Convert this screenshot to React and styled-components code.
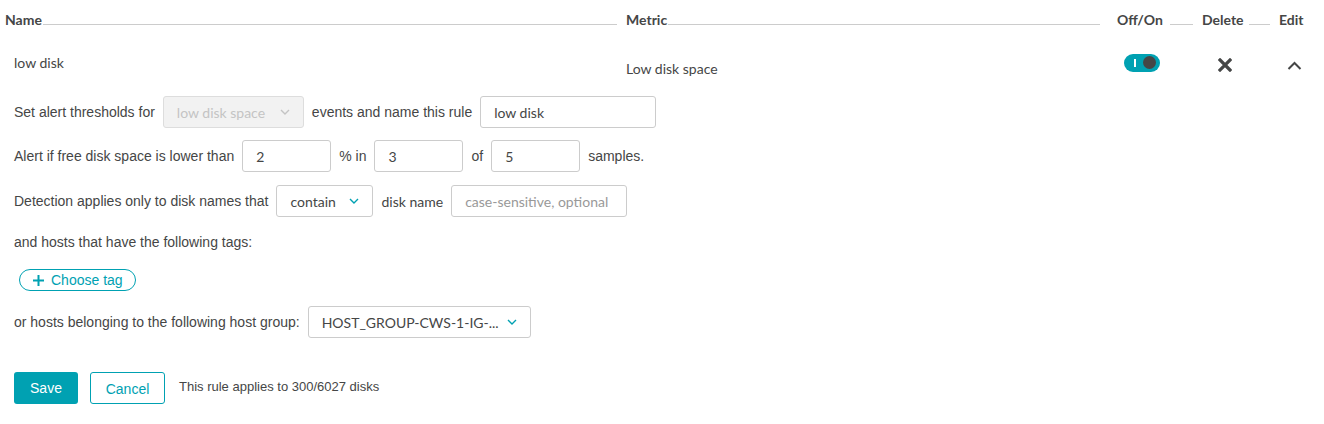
import React, { useState } from "react";
import styled, { createGlobalStyle } from "styled-components";

const GlobalStyle = createGlobalStyle`
  body {
    margin: 0;
    background: #ffffff;
    color: #454646;
    font-family: "Liberation Sans", Arial, sans-serif;
  }
`;

const TEAL = "#00a1b2";

const ChevronDown = ({ color = TEAL }) => (
  <svg width="10" height="6" viewBox="0 0 10 6">
    <path d="M1 1l4 4 4-4" fill="none" stroke={color} strokeWidth="1.4" />
  </svg>
);

const App = () => {
  const [enabled, setEnabled] = useState(true);

  return (
    <>
      <GlobalStyle />
      <Page>
        <Header>
          <HeadCell>
            <HeadText>Name</HeadText>
            <HeadLine />
          </HeadCell>
          <HeadCell>
            <HeadText>Metric</HeadText>
            <HeadLine $gap={17} />
          </HeadCell>
          <HeadCell>
            <HeadText>Off/On</HeadText>
            <HeadLine $left={7} />
          </HeadCell>
          <HeadCell>
            <HeadText>Delete</HeadText>
            <HeadLine $left={5} />
          </HeadCell>
          <HeadCell>
            <HeadText>Edit</HeadText>
          </HeadCell>
        </Header>

        <RuleRow>
          <RuleName>low disk</RuleName>
          <RuleMetric>Low disk space</RuleMetric>
          <IconCell $left={7} $shift={-5}>
            <Toggle $on={enabled} onClick={() => setEnabled(!enabled)}>
              <ToggleBar />
              <ToggleKnob />
            </Toggle>
          </IconCell>
          <IconCell $left={16}>
            <svg width="14" height="14" viewBox="0 0 14 14">
              <path
                d="M2 2l10 10M12 2L2 12"
                stroke="#454646"
                strokeWidth="3.2"
                strokeLinecap="square"
              />
            </svg>
          </IconCell>
          <IconCell $left={8}>
            <svg width="15" height="9" viewBox="0 0 15 9">
              <path
                d="M1.5 8l6-6 6 6"
                fill="none"
                stroke="#454646"
                strokeWidth="2"
              />
            </svg>
          </IconCell>
        </RuleRow>

        <Form>
          <FormRow>
            <Label>Set alert thresholds for</Label>
            <Select $width={141} disabled>
              <span>low disk space</span>
              <ChevronDown color="#c4c4c4" />
            </Select>
            <Label>events and name this rule</Label>
            <TextInput $width={176} defaultValue="low disk" />
          </FormRow>

          <FormRow>
            <Label>Alert if free disk space is lower than</Label>
            <TextInput $width={89} defaultValue="2" />
            <Label>% in</Label>
            <TextInput $width={89} defaultValue="3" />
            <Label>of</Label>
            <TextInput $width={89} defaultValue="5" />
            <Label>samples.</Label>
          </FormRow>

          <FormRow $shift={2}>
            <Label>Detection applies only to disk names that</Label>
            <Select $width={97}>
              <span>contain</span>
              <ChevronDown />
            </Select>
            <Label $font="Lato">disk name</Label>
            <TextInput $width={176} placeholder="case-sensitive, optional" />
          </FormRow>

          <FormRow $height={40}>
            <Label>and hosts that have the following tags:</Label>
          </FormRow>

          <TagRow>
            <TagButton>
              <svg width="11" height="11" viewBox="0 0 11 11">
                <path d="M5.5 0v11M0 5.5h11" stroke={TEAL} strokeWidth="2" />
              </svg>
              Choose tag
            </TagButton>
          </TagRow>

          <FormRow $height={48}>
            <Label>or hosts belonging to the following host group:</Label>
            <Select $width={223}>
              <span>HOST_GROUP-CWS-1-IG-...</span>
              <ChevronDown />
            </Select>
          </FormRow>

          <Actions>
            <PrimaryButton>Save</PrimaryButton>
            <SecondaryButton>Cancel</SecondaryButton>
            <Note>This rule applies to 300/6027 disks</Note>
          </Actions>
        </Form>
      </Page>
    </>
  );
};

export default App;

const Page = styled.div`
  width: 1324px;
  height: 424px;
  overflow: hidden;
`;

const Header = styled.div`
  display: grid;
  grid-template-columns: 621px 491px 85px 77px 1fr;
  height: 40px;
  padding-left: 5px;
  align-items: center;
`;

const HeadCell = styled.div`
  display: flex;
  align-items: baseline;
  padding-bottom: 1px;
`;

const HeadText = styled.span`
  font-family: "Lato", "Open Sans", sans-serif;
  font-weight: 700;
  font-size: 14px;
  color: #454646;
`;

const HeadLine = styled.span`
  flex: 1;
  height: 0;
  border-bottom: 1px solid #cccccc;
  margin-left: ${(p) => p.$left || 1}px;
  margin-right: ${(p) => p.$gap || 9}px;
`;

const RuleRow = styled.div`
  display: grid;
  grid-template-columns: 626px 491px 85px 77px 1fr;
  height: 50px;
  align-items: center;
  font-family: "Lato", "Open Sans", sans-serif;
  font-size: 14px;
  color: #454646;
`;

const RuleName = styled.div`
  padding-left: 14px;
  padding-bottom: 6px;
`;

const RuleMetric = styled.div`
  padding-top: 6px;
`;

const IconCell = styled.div`
  display: flex;
  align-items: center;
  padding-left: ${(p) => p.$left || 0}px;
  margin-top: ${(p) => p.$shift || 0}px;
`;

const Toggle = styled.button`
  position: relative;
  width: 36px;
  height: 18px;
  border: none;
  border-radius: 9px;
  padding: 0;
  background: ${(p) => (p.$on ? TEAL : "#cccccc")};
  cursor: pointer;
`;

const ToggleBar = styled.span`
  position: absolute;
  left: 10px;
  top: 5px;
  width: 1.5px;
  height: 8px;
  background: #ffffff;
`;

const ToggleKnob = styled.span`
  position: absolute;
  right: 4px;
  top: 2.5px;
  width: 13px;
  height: 13px;
  border-radius: 50%;
  background: #454646;
`;

const Form = styled.div`
  padding-left: 14px;
`;

const FormRow = styled.div`
  display: flex;
  align-items: center;
  gap: 8px;
  height: ${(p) => p.$height || 44}px;
  padding-top: ${(p) => p.$shift || 0}px;
  box-sizing: border-box;
`;

const Label = styled.span`
  font-family: ${(p) => (p.$font ? `"${p.$font}", sans-serif` : `"Liberation Sans", Arial, sans-serif`)};
  font-size: 14px;
  color: #454646;
  white-space: nowrap;
`;

const TextInput = styled.input`
  box-sizing: border-box;
  width: ${(p) => p.$width}px;
  height: 32px;
  border: 1px solid #cccccc;
  border-radius: 3px;
  padding: 0 13px;
  font-family: "Lato", "Open Sans", sans-serif;
  font-size: 14px;
  color: #454646;
  outline: none;

  &::placeholder {
    color: #999999;
  }
`;

const Select = styled.div`
  box-sizing: border-box;
  width: ${(p) => p.$width}px;
  height: 32px;
  display: flex;
  align-items: center;
  justify-content: space-between;
  padding: 0 13px;
  border: 1px solid ${(p) => (p.disabled ? "#dddddd" : "#cccccc")};
  border-radius: 3px;
  background: ${(p) => (p.disabled ? "#f2f2f2" : "#ffffff")};
  font-family: "Lato", "Open Sans", sans-serif;
  font-size: 14px;
  color: ${(p) => (p.disabled ? "#c4c4c4" : "#454646")};
  white-space: nowrap;
`;

const TagRow = styled.div`
  display: flex;
  align-items: center;
  height: 36px;
  padding-left: 5px;
`;

const TagButton = styled.button`
  display: flex;
  align-items: center;
  gap: 7px;
  height: 22px;
  padding: 0 12px 0 13px;
  border: 1px solid ${TEAL};
  border-radius: 11px;
  background: #ffffff;
  color: ${TEAL};
  font-family: "Liberation Sans", Arial, sans-serif;
  font-size: 14px;
  cursor: pointer;
`;

const Actions = styled.div`
  display: flex;
  align-items: center;
  gap: 12px;
  height: 44px;
  margin-top: 20px;
`;

const PrimaryButton = styled.button`
  width: 64px;
  height: 32px;
  border: none;
  border-radius: 3px;
  background: ${TEAL};
  color: #ffffff;
  font-family: "Liberation Sans", Arial, sans-serif;
  font-size: 14px;
  cursor: pointer;
`;

const SecondaryButton = styled.button`
  width: 75px;
  height: 32px;
  border: 1px solid ${TEAL};
  border-radius: 3px;
  background: #ffffff;
  color: ${TEAL};
  font-family: "Liberation Sans", Arial, sans-serif;
  font-size: 14px;
  padding-top: 2px;
  cursor: pointer;
`;

const Note = styled.span`
  margin-left: 2px;
  margin-top: -3px;
  font-family: "Liberation Sans", Arial, sans-serif;
  font-size: 13px;
  color: #454646;
`;
